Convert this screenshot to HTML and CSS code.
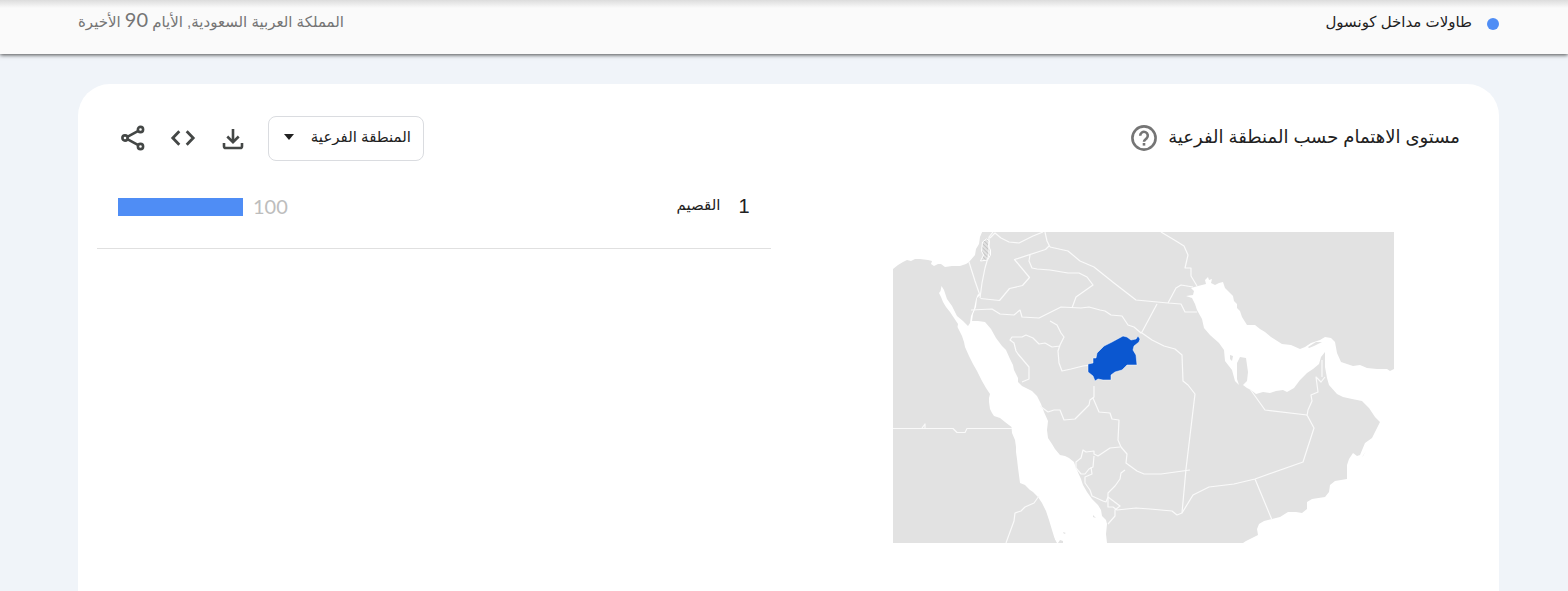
FILE: index.html
```html
<!DOCTYPE html>
<html lang="ar" dir="rtl">
<head>
<meta charset="utf-8">
<meta name="viewport" content="width=device-width, initial-scale=1">
<title>مستوى الاهتمام حسب المنطقة الفرعية</title>
<link rel="stylesheet" href="styles.css">
</head>
<body>
<header class="term-bar">
  <div class="term"><span class="term-dot"></span><span class="term-name">طاولات مداخل كونسول</span></div>
  <div class="term-scope">المملكة العربية السعودية, الأيام <span class="number">90</span> الأخيرة</div>
</header>
<main class="page">
  <section class="card">
    <div class="card-head">
      <h1 class="card-title">مستوى الاهتمام حسب المنطقة الفرعية</h1>
      <button class="icon-button help" type="button" aria-label="مساعدة">
        <svg width="28" height="28" viewBox="0 0 28 28" fill="none" stroke="#757575" stroke-width="2.6"><circle cx="14" cy="13" r="11.6"/><path d="M10.200 10.800a3.800 3.800 0 1 1 6.300 2.700c-1.500 1.300-2.500 1.700-2.500 3.300"/><path d="M14 18v2.600"/></svg>
      </button>
      <div class="tools">
        <div class="picker">
          <select class="picker-select" aria-label="مستوى المنطقة"><option>المنطقة الفرعية</option></select>
          <svg class="picker-arrow" width="12" height="6" viewBox="0 0 12 6"><path d="M1 0h10L6 6z" fill="#212121"/></svg>
        </div>
        <button class="icon-button" type="button" aria-label="تنزيل">
          <svg width="30" height="30" viewBox="0 0 30 30" fill="none" stroke="#444746" stroke-width="2.6"><path d="M15 5v13M9.300 12.500l5.700 5.700 5.700-5.700M6 19v3.200q0 1.800 1.800 1.800h14.400q1.800 0 1.800-1.800v-3.200"/></svg>
        </button>
        <button class="icon-button" type="button" aria-label="تضمين">
          <svg width="30" height="30" viewBox="0 0 30 30" fill="none" stroke="#444746" stroke-width="2.8"><path d="M11.300 7.300L4.800 14l6.500 6.700M18.700 7.300L25.200 14l-6.500 6.700"/></svg>
        </button>
        <button class="icon-button" type="button" aria-label="مشاركة">
          <svg width="30" height="30" viewBox="0 0 30 30" fill="none" stroke="#444746" stroke-width="2.6"><path d="M9.300 12.800L20.300 6.800M9.300 15.200L20.300 21.200"/><circle cx="7" cy="14" r="2.600"/><circle cx="22.500" cy="5.500" r="2.600"/><circle cx="22.500" cy="22.500" r="2.600"/></svg>
        </button>
      </div>
    </div>
    <div class="card-body">
      <div class="map-pane">
        <svg class="map" viewBox="893 232 501 311" role="img" aria-label="خريطة المملكة العربية السعودية">
          <defs>
            <pattern id="hatch" width="3" height="3" patternUnits="userSpaceOnUse" patternTransform="rotate(-45)"><path d="M0 0v3" stroke="#c4c4c4" stroke-width="2"/></pattern>
          </defs>
          <path class="land" d="M893 232h501v311H893z"/>
          <g class="sea">
            <path d="M890 230V271L893 269 898 265 903 262 907 260 911 261 915 259 920 259 928 260 932 261 931 264 934 266 938 264 941 264 945 267 952 266 960 266 966 264 969 262 975 255 976 249 979 244 980 237 983 230z"/>
            <path d="M941.500 286L940.500 291 939 293 941 297 943 302 946 307 950 312 954 318 958 324 957.500 327 960 332 962 336 964 342 965 347 969 356 973 364 977 371 982 381 986 388 990 394 989 398 989 402 990 409 992 413 994 416 1000 418 1005 422 1011.500 427 1012 433 1015 440 1016 447 1016 452 1017 459 1018 468 1020 483 1025 485 1030 490 1033 492 1038 497 1042 503 1046 511 1049 520 1052 530 1056 543H1107L1106 534 1107 524 1106 520 1102 516 1101 510 1098 505 1092 499 1087 492 1083 485 1081 479 1076 468 1074 462 1069 458 1065 456 1060 455 1055 449 1052 444 1048 438 1047 430 1048 421 1044 412 1041 404 1037 396 1032 391 1026 388 1022 386 1018 382 1018 378 1014 370 1013 365 1010 359 1006 350 1002 346 996 338 991 329 985 322 978 321 972 321 973 314 976 307 977 298 980 295 978 294 976 299 974 309 971 316 970 323 968 326 963 321 957 316 952 306 947 299 944 290z"/>
            <path d="M1186 296L1193 295 1194 291 1191 288 1198 286 1206 284 1205 280 1208 277 1209 280 1212 279 1211 283 1215 285 1219 283 1223 282 1225 288 1229 292 1233 296 1234 301 1237 304 1237 308 1240 311 1242 317 1247 325 1255 325 1260 329 1265 332 1271 337 1282 344 1291 345 1300 349 1305 347 1311 343 1320 340 1325 337 1331 338 1335 342 1337 353 1341 362 1347 364 1353 366 1360 365 1367 368 1377 369 1387 369 1390 371 1394 369H1396V545H1240L1246 541 1252 538 1258 535 1257 529 1259 524 1264 521 1272 519 1280 517 1288 512 1296 512 1302 513 1307 509 1307 502 1312 499 1325 497 1329 492 1330 485 1335 481 1347 479 1347 465 1349 459 1353 453 1357 456 1360 455 1365 443 1372 438 1375 432 1380 422 1375 417 1369 408 1362 401 1352 399 1343 397 1337 394 1329 385 1327 378 1325 367 1325 352 1321 357 1319 364 1313 369 1307 373 1300 380 1294 388 1287 392 1283 390 1276 391 1270 393 1263 392 1256 394 1251 390 1247 388 1243 385 1247 381 1248 372 1246 358 1240 357 1237 363 1237 379 1239 385 1235 381 1232 370 1225 361 1224 350 1219 343 1210 335 1204 328 1202 319 1197 310 1195 304 1192 298z"/>
          </g>
          <g class="land">
            <path d="M1308 347L1316 342 1322 342 1314 346 1309 348zM1230 355l3 1-1 5-2-2zM1362 457l4-6-3 5zM1050 531l7 12h-7zM1060 540l3 1v2h-5zM1063 532l3 1-2 1zM1093 515l3 3-3-1z"/>
          </g>
          <path class="hatched" d="M982.500 242l4-3 3 2-1 5 2 4 0 5-3 5-7 1 3-6-2-4z" fill="url(#hatch)"/>
          <g class="border">
            <path d="M969 262l6 19 5.500 16M980 298l2-15 3-15 4-14v-17l4-5M990 238l5-5 6 5 8 4 10 1 14-7 10-4M980.500 298.500l19 2 10-12 13-3 7-8-15-18 31-10 4-4M1045 232l2 9 3 6M1030 255l-1 6 3 7 5 1 13 1"/>
            <path d="M1050 247l18 4 12 10 14 6 20 16 22 17 32 3 13 1 4 8h12M1161 232l15 9 8 5 4 9-3 13h6v8l6 10M1168 303l8-15 5-3 12 2M1157 304l-15 28-1 1-7-6-6-2-6-9-11-1-6-4-5-1-11-3-8 1-20-1-10 5-12 6-17-1-2-7-6 5-14-1-8-5-21 1M1050 270l18 3h11l8 4 6 8-17 12-4 11M1050 321l7 4 4 8 3 4-4 8-2 6 1 12 3 8 9-2 12-3 9-1M1060 346l-8 1-7-4-6 1-6-6-7-3-4 2-10 0-2 3 4 3 2 8 2 3 11 13 0 12-7 3M1142 333l10 7 12 6 11 3 7 6 1 26 5 4 7 9-9 75-4 44-5 2-5-4-22-2-14-1-19 2-4-3-5 0 0-14 7-7 5-7 1-6 4-3"/>
            <path d="M1094 386v11l-4 3-1 5-6 6-8 8-11 1-4-10h-6l-6 2-8-6M1093 398l6 14 11 1 2 6 7 1-1 20 3 7 6 7-1 9 11 8 7 3 17 0 29-4M1120 447l-10 1-12 8-4-2 0-3-8 1-3-2-2 8-5 4 0 6 5 6 4 0 4-5 4-2 1-11M1091 467l1 7-7 3 0 6 5 7 2 6 11 5 3 1 2-5 12 9-5 4 0 6-7 8"/>
            <path d="M893 428.500h60l4 4h8l2-4h45M922 428l3-4 0 4M1006 543l8-22 1-8 6-2 4-4 9-4 5-7M1182 513l11-18 16-8 25-3 21-5 48-17 11-34-7-13-42-5-15-21M1307 416l1-6 4-9-1-6 7-3-2-15 5 5 4-5M1322 377v-17M1255 479l17 41"/>
          </g>
          <path class="region" d="M1123 336l4 1 4 3 5-1 2-3 2 3-1 3-5 4-1 4 3 5 1 10h-10l-5 5-7 2-4 3 0 5-8 0-5-1-3 2-2-5-5-4v-8l5-1 0-5h3l1-5 7-7 8-4z"/>
        </svg>
      </div>
      <ol class="list">
        <li class="row">
          <span class="rank">1</span><span class="name">القصيم</span>
          <span class="value number">100</span><span class="track"><span class="bar" style="width:100%"></span></span>
        </li>
      </ol>
    </div>
  </section>
</main>
</body>
</html>
```
FILE: styles.css
```css
* { box-sizing: border-box; }
body {
  margin: 0;
  min-height: 100vh;
  display: flex;
  flex-direction: column;
  background: #f0f4f9;
  color: #212121;
  font-family: "Liberation Sans", "DejaVu Sans", sans-serif;
  font-size: 15px;
}
.term-bar {
  display: flex;
  justify-content: space-between;
  align-items: center;
  padding: 8px 69px 18px 78px;
  line-height: 28px;
  background: linear-gradient(#dcdcdc, #fafafa 8px);
  box-shadow: 0 1px 4px rgba(0, 0, 0, .7);
}
.term { display: flex; align-items: center; gap: 15px; }
.term-dot { width: 12px; height: 12px; margin-top: 4px; border-radius: 50%; background: #4f8df5; }
.term-scope { color: #757575; }
.number { font-family: Lato, sans-serif; font-size: 20px; line-height: 20px; }
.page { flex: 1; display: flex; padding: 30px 69px 0 78px; }
.card { flex: 1; background: #fff; border-radius: 32px 32px 0 0; }
.card-head {
  display: flex;
  align-items: center;
  gap: 10px;
  padding: 32px 39px 0 40px;
}
.card-title { margin: 0; padding-bottom: 4px; font-size: 18px; font-weight: 400; line-height: 32px; }
.tools { display: flex; align-items: center; gap: 20px; margin-inline-start: auto; }
.icon-button {
  display: flex;
  padding: 0;
  border: 0;
  background: none;
}
.picker { display: grid; align-items: center; }
.picker-select, .picker-arrow { grid-area: 1 / 1; }
.picker-select {
  appearance: none;
  height: 45px;
  padding: 0 12px 4px 41px;
  border: 1px solid #dadce0;
  border-radius: 8px;
  background: #fff;
  color: #212121;
  font: inherit;
}
.picker-arrow { justify-self: end; margin: 0 0 4px 15px; pointer-events: none; }
.card-body { display: grid; grid-template-columns: 1fr 1fr; }
.map-pane { display: flex; justify-content: center; padding: 71px 0 48px; }
.map { width: 100%; max-width: 501px; height: auto; align-self: start; }
.land { fill: #e2e2e2; }
.sea { fill: #fff; }
.border { fill: none; stroke: #fafafa; stroke-width: 1.200; stroke-linejoin: round; }
.hatched { stroke: #fff; }
.region { fill: #0b57d0; stroke: #fff; stroke-width: .5; }
.list { list-style: none; margin: 0 18px 0 19px; padding: 0; }
.row {
  display: flex;
  align-items: center;
  height: 88px;
  padding: 4px 21px;
  padding-bottom: 0;
  border-bottom: 1px solid #e0e0e0;
}
.rank { font-size: 20px; }
.name { margin-inline-start: 18px; padding-bottom: 4px; }
.value {
  margin-inline-start: auto;
  padding-bottom: 2px;
  color: #bdbdbd;
}
.track { width: 125px; margin-inline-start: 10px; }
.bar { display: block; height: 18px; background: #4f8df5; }
```
